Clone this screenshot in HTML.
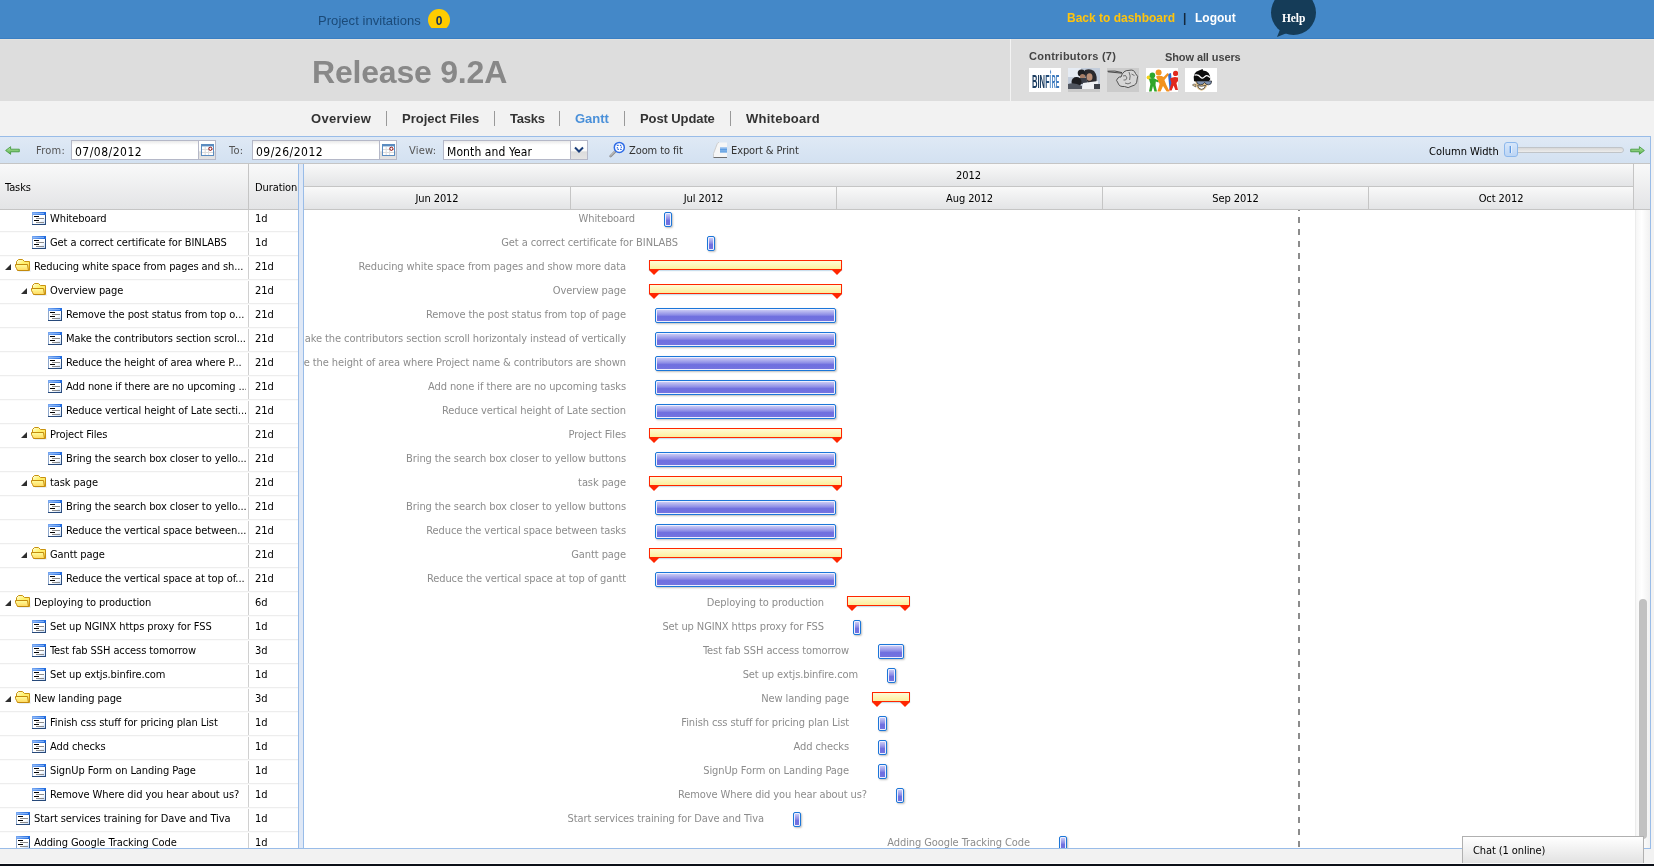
<!DOCTYPE html>
<html lang="en">
<head>
<meta charset="utf-8">
<title>Release 9.2A - Gantt</title>
<style>
*{box-sizing:border-box}
html,body{margin:0;padding:0}
body{width:1654px;height:866px;overflow:hidden;background:#f2f2f2;position:relative;font-family:"DejaVu Sans Condensed","Liberation Sans",sans-serif;font-size:11px;color:#000;letter-spacing:-0.09px}
#wrap{position:absolute;left:0;top:0;width:1654px;height:866px;will-change:transform}
.abs{position:absolute}
.hd{font-family:"Liberation Sans",sans-serif;font-weight:bold;letter-spacing:0}
#top{left:0;top:0;width:1654px;height:38px;background:#4488c8}
#top2{left:0;top:38px;width:1654px;height:1px;background:#3a7fc3}
#top3{left:0;top:39px;width:1654px;height:1px;background:#e4e3e0}
#band{left:0;top:40px;width:1654px;height:61px;background:#dddddd}
#vline{left:1010px;top:39px;width:1px;height:62px;background:#f3f3f3}
#inv{left:318px;top:13px;letter-spacing:.05px;font-family:"Liberation Sans",sans-serif;font-size:13px;line-height:16px;color:#1b4a78;white-space:nowrap}
#badge{left:428px;top:9px;width:22px;height:19px;overflow:hidden}
#badge i{position:absolute;left:0;top:0;width:22px;height:22px;border-radius:11px;background:#ffcc00}
#badge span{position:absolute;left:0;top:5px;width:22px;text-align:center;font:bold 12px/14px "Liberation Sans",sans-serif;color:#14305a}
#back{left:1067px;top:10px;font-size:12px;line-height:16px;color:#ffc40d;white-space:nowrap}
#pipe{left:1183px;top:10px;font-size:12px;line-height:16px;color:#14283c}
#logout{left:1195px;top:10px;font-size:12px;line-height:16px;color:#fff}
#help{left:1271px;top:-10px;width:45px;height:45px;border-radius:50%;background:#153c58}
#helptail{left:1274px;top:24px}
#helptx{left:1282px;top:10px;font:bold 11.5px/16px "Liberation Serif",serif;color:#fff}
#title{left:312px;top:53px;font-size:32px;line-height:38px;color:#888;letter-spacing:-0.2px;white-space:nowrap}
#contrib{left:1029px;top:49px;font-size:11px;line-height:14px;color:#444;white-space:nowrap;letter-spacing:0.25px}
#showall{left:1165px;top:50px;font-size:11px;line-height:14px;color:#444;white-space:nowrap;letter-spacing:-0.1px}
.av{position:absolute;top:68px;width:32px;height:24px;overflow:hidden;background:#fff}
#nav{left:311px;top:111px;height:16px;white-space:nowrap;font-size:13px;line-height:16px;color:#333}
#nav span{position:absolute;top:0}
#nav i{position:absolute;top:0px;width:1px;height:15px;background:#999}
/* toolbar */
#tb{left:0;top:136px;width:1651px;height:27px;border-top:1px solid #99bce8;border-right:1px solid #99bce8;background:linear-gradient(#dfe9f5,#d3e1f1)}
#tbb{left:0;top:163px;width:1650px;height:1px;background:#c5c5c5}
.tl{position:absolute;top:144px;font-size:11px;line-height:14px;color:#555;white-space:nowrap;letter-spacing:.25px}
.fld{position:absolute;top:140px;height:20px;border:1px solid #b5b8c8;background:linear-gradient(#e9e9e9 0,#fff 4px,#fff 100%);font-size:12px;line-height:18px;padding:2px 0 0 3px;color:#000;letter-spacing:.5px;white-space:nowrap;overflow:hidden}
.trg{position:absolute;top:140px;width:17px;height:20px;border:1px solid #b5b8c8;border-left:0;background:linear-gradient(#fff 0,#fafafa 55%,#dcdcdc 60%,#e4e4e4 100%)}
/* grid */
#hdrL{left:0;top:164px;width:298px;height:46px;background:linear-gradient(#f9f9f9,#e3e4e6);border-bottom:1px solid #c5c5c5}
#hdrL .c1{position:absolute;left:5px;top:17px;line-height:14px}
#hdrL .sep{position:absolute;left:248px;top:0;width:1px;height:45px;background:#c5c5c5}
#hdrL .c2{position:absolute;left:255px;top:17px;line-height:14px}
#split{left:298px;top:164px;width:6px;height:685px;background:#dfe8f6;border-left:1px solid #99bce8;border-right:1px solid #99bce8}
#hdrR{left:304px;top:164px;width:1346px;height:46px;background:linear-gradient(#f9f9f9,#e3e4e6);border-bottom:1px solid #c5c5c5}
#hdrR .r1{position:absolute;left:0;top:0;width:1330px;height:23px;border-bottom:1px solid #c5c5c5;border-right:1px solid #c5c5c5;background:linear-gradient(#f9f9f9,#e3e4e6);text-align:center;line-height:24px}
#hdrR .m{position:absolute;top:23px;height:22px;border-right:1px solid #c5c5c5;background:linear-gradient(#f9f9f9,#e3e4e6);text-align:center;line-height:24px}
#tree{left:0;top:210px;width:298px;height:638px;background:#fff;overflow:hidden}
#gantt{left:304px;top:210px;width:1331px;height:638px;background:#fff;overflow:hidden}
#colsep{left:248px;top:0;width:1px;height:638px;background:#d0d0d0}
.tr{position:absolute;left:0;width:298px;height:24px;border-top:1px solid #ededed;box-shadow:inset 0 1px 0 #fbfbfb}
.tr .ic{position:absolute;top:4px}
.tr .fo{top:3px}
.tr .ar{position:absolute;top:8px}
.tr .tt{position:absolute;top:4px;line-height:14px;white-space:nowrap;overflow:hidden}
.tr .du{position:absolute;left:255px;top:4px;line-height:14px}
.gr{position:absolute;left:0;width:1331px;height:24px}
.lb{position:absolute;right:auto;left:0;top:5px;line-height:14px;text-align:right;white-space:nowrap;color:#8c8c8c;direction:rtl;overflow:hidden}
.lb{direction:ltr;display:flex;justify-content:flex-end}
.tb{position:absolute;top:5px;height:15px;border:1px solid #1b76d8;border-radius:2px;background:#eef;box-shadow:1px 1px 2px rgba(0,0,0,.25)}
.tb i{position:absolute;left:1px;top:1px;right:1px;bottom:1px;background:linear-gradient(#c9c9f4 0,#8d8de6 45%,#6f6fdf 60%,#7373e0 100%)}
.pb{position:absolute;top:5px;height:10px;border:1px solid #ff2600;background:linear-gradient(#fffbd5,#fdee9d);box-shadow:0 1px 1px rgba(150,190,220,.5)}
.pb b{position:absolute;top:9px;width:0;height:0;border-left:5.5px solid transparent;border-right:5.5px solid transparent;border-top:5px solid #ff2600}
.pb b.l{left:-1px}
.pb b.r{right:-1px}
#today{left:1298px;top:210px;width:2px;height:638px;background-image:linear-gradient(to bottom,#8c8c8c 0,#8c8c8c 6px,transparent 6px,transparent 12px);background-size:2px 12px;background-repeat:repeat-y;background-position:0 7px}
#vs{left:1635px;top:210px;width:15px;height:638px;background:linear-gradient(to right,#f6f6f6,#fff 40%,#f1f1f1);border-left:1px solid #ececec}
#vsh{left:1634px;top:164px;width:16px;height:46px;background:linear-gradient(#f9f9f9,#e3e4e6);border-bottom:1px solid #c5c5c5}
#thumb{left:1639px;top:599px;width:8px;height:240px;border-radius:4px;background:#c1c1c1}
#rb{left:1650px;top:136px;width:1px;height:713px;background:#99bce8}
#bb{left:0;top:848px;width:1651px;height:1px;background:#99bce8}
#dark{left:0;top:864px;width:1654px;height:2px;background:#0c1018}
#dark0{left:0;top:863px;width:1654px;height:1px;background:#fafafa}
#chat{left:1462px;top:836px;width:182px;height:27px;border:1px solid #b0b0b0;border-bottom:0;background:linear-gradient(#fff,#e2e2e2);padding:7px 0 0 10px;line-height:14px;font-size:11px}
</style>
</head>
<body>
<div id="wrap">
<svg width="0" height="0" style="position:absolute"><defs>
<linearGradient id="tg" x1="0" y1="0" x2="1" y2="1"><stop offset="0" stop-color="#fff"/><stop offset="0.6" stop-color="#fff"/><stop offset="1" stop-color="#c4daf8"/></linearGradient>
<linearGradient id="fg" x1="0" y1="0" x2="0" y2="1"><stop offset="0" stop-color="#ffff9e"/><stop offset="1" stop-color="#ffd75e"/></linearGradient>
<linearGradient id="fb" x1="0" y1="0" x2="1" y2="1"><stop offset="0" stop-color="#fffde0"/><stop offset="0.4" stop-color="#fff36e"/><stop offset="1" stop-color="#ffd862"/></linearGradient>
<linearGradient id="th" x1="0" y1="0" x2="1" y2="0"><stop offset="0" stop-color="#78a8f2"/><stop offset="1" stop-color="#1c68de"/></linearGradient>
</defs></svg>

<div id="top" class="abs"></div><div id="top2" class="abs"></div><div id="top3" class="abs"></div>
<div id="band" class="abs"></div><div id="vline" class="abs"></div>
<div id="inv" class="abs">Project invitations</div>
<div id="badge" class="abs"><i></i><span>0</span></div>
<div id="back" class="abs hd">Back to dashboard</div>
<div id="pipe" class="abs hd">|</div>
<div id="logout" class="abs hd">Logout</div>
<div id="help" class="abs"></div>
<svg id="helptail" class="abs" width="14" height="14" viewBox="0 0 14 14"><path d="M3 13 L7 3 L13 9 Z" fill="#153c58"/></svg>
<div id="helptx" class="abs">Help</div>
<div id="title" class="abs hd">Release 9.2A</div>
<div id="contrib" class="abs hd">Contributors (7)</div>
<div id="showall" class="abs hd">Show all users</div>

<div class="av" style="left:1029px"><svg width="32" height="24" viewBox="0 0 32 24"><rect width="32" height="24" fill="#fff"/><text x="3" y="20.4" font-family="Liberation Sans, sans-serif" font-weight="bold" font-size="19" textLength="13" lengthAdjust="spacingAndGlyphs" fill="#1c3d60">BIN</text><text x="16.3" y="20.4" font-family="Liberation Sans, sans-serif" font-weight="bold" font-size="19" textLength="4.2" lengthAdjust="spacingAndGlyphs" fill="#1f4a78">F</text><text x="20.6" y="20.4" font-family="Liberation Sans, sans-serif" font-weight="bold" font-size="19" textLength="1.6" lengthAdjust="spacingAndGlyphs" fill="#4a86c8">I</text><path d="M21.6 6 Q20.4 3.6 21.4 1.6 Q22.6 4 21.9 6.4 Z" fill="#4a86c8"/><text x="22.8" y="20.4" font-family="Liberation Sans, sans-serif" font-weight="bold" font-size="19" textLength="7.4" lengthAdjust="spacingAndGlyphs" fill="#3a78bc">RE</text></svg></div>
<div class="av" style="left:1068px;background:#c9c9c9"><svg width="32" height="24" viewBox="0 0 32 24"><rect width="32" height="21" fill="#c3cddb"/><rect width="13" height="9" fill="#e6ecf4"/><path d="M17 2 Q22 0 26 3 Q30 8 28 15 L20 15 Q16 8 17 2 Z" fill="#2b2a2e"/><ellipse cx="21.5" cy="9" rx="3" ry="3.8" fill="#b98e76"/><ellipse cx="13.5" cy="5" rx="3.8" ry="3.6" fill="#1f2024"/><ellipse cx="14.5" cy="8.6" rx="2.6" ry="2.6" fill="#a67d66"/><path d="M10 10 H18 L20 16 H9 Z" fill="#3a3f4a"/><ellipse cx="8.5" cy="14" rx="5" ry="5" fill="#1c1d21"/><path d="M0 21 V16 Q6 14 14 18 V21 Z" fill="#50555f"/><path d="M15 15 L30 13 V21 H14 Z" fill="#eef0f3"/><rect x="26" y="16" width="6" height="5" fill="#3c4048"/><rect y="21" width="32" height="3" fill="#c9c9c9"/></svg></div>
<div class="av" style="left:1107px;background:#cbcbcb"><svg width="32" height="24" viewBox="0 0 32 24"><rect width="32" height="24" fill="#cbcbcb"/><path d="M0.5 3.2 Q8 2.2 15 4.6 M1 3.8 L15 5.2" fill="none" stroke="#3c3c3c" stroke-width="0.9"/><path d="M14 9 Q16 2 22 2.4 Q27 1 28.5 5.5 Q32 8 30 12 Q30 17 25 18 Q21 21 17.5 18.5 Q12 19 11 15 Q8 12 11 10 Q12 8.6 14 9 Z" fill="#d6d6d6" stroke="#444" stroke-width="0.9"/><path d="M16 8 Q19 6 20 10 Q19 13 16.5 12 M22 4 Q24 8 22.6 12 M24.5 6 L27.5 7.6 M18 15 Q21 17 24 14.6" fill="none" stroke="#555" stroke-width="0.8"/></svg></div>
<div class="av" style="left:1146px"><svg width="32" height="24" viewBox="0 0 32 24"><rect width="32" height="24" fill="#fff"/><path d="M22 6 L25 5 L26.5 20 L23.5 21 Z" fill="#2c6ad0"/><circle cx="2.6" cy="9.4" r="2" fill="#f2d21a"/><circle cx="6.4" cy="7.4" r="2.8" fill="#2fa62a"/><path d="M3 11 Q7 9 10 11.5 L9.5 17 L11 23.5 H8.4 L7 18 L5.6 23.5 H3 L4.4 16 Z" fill="#2fa62a"/><path d="M9 11 L13 12.6 L12.4 14.4 L8.6 13 Z" fill="#2fa62a"/><circle cx="12.6" cy="4.4" r="3" fill="#f2921e"/><path d="M10 8.6 Q14 6.6 17.6 9 L21.5 5 L23 6.4 L18.4 12 L20.4 17 L23.6 23.4 H20.6 L17 18 L14.6 23.6 H11.4 L13.6 16 Z" fill="#f2921e"/><circle cx="29.6" cy="5.4" r="2.6" fill="#e2281e"/><path d="M24 10.6 Q28 8 32 9.6 V13 L30.4 15 L32 22 H29.4 L27.6 17.6 L25.6 22.6 H23 L25.4 15 Z" fill="#e2281e"/></svg></div>
<div class="av" style="left:1185px"><svg width="32" height="24" viewBox="0 0 32 24"><rect width="32" height="24" fill="#fff"/><path d="M9 13 Q7.4 4 14 2.4 L17.6 1 L18 2.4 Q25.6 2.6 25.2 11.6 L23 14 H11 Z" fill="#0c0c0c"/><path d="M10.6 13 Q10 19 13.6 21.6 Q16.6 23.8 19.4 21.6 Q23 19 23 13 Z" fill="#e5c58e"/><path d="M9.4 7.2 Q13 6 15.4 9 Q17.6 11.4 20 8.4 Q22 6.6 25 9.4" fill="none" stroke="#fff" stroke-width="1.3"/><path d="M11.4 13 H26.6 Q27 16.6 23.4 16.8 Q20.6 16.8 19.6 14.4 Q18.4 17 15.4 16.8 Q11.6 16.6 11.4 13 Z" fill="#7e93b4" stroke="#222" stroke-width="0.7"/><path d="M12.6 17.6 Q16.4 19 20.6 17.4 Q19.6 21.4 16.6 21.4 Q13.6 21.4 12.6 17.6 Z" fill="#fff" stroke="#222" stroke-width="0.7"/><path d="M7.4 17 Q9 15 10.8 16.6 L10.6 19 Z" fill="#e5c58e" stroke="#222" stroke-width="0.5"/></svg></div>
<div id="nav" class="abs hd">
<span style="left:0;letter-spacing:.3px">Overview</span><i style="left:75px"></i>
<span style="left:91px">Project Files</span><i style="left:183px"></i>
<span style="left:199px;letter-spacing:-.25px">Tasks</span><i style="left:248px"></i>
<span style="left:264px;color:#4a90d9">Gantt</span><i style="left:313px"></i>
<span style="left:329px;letter-spacing:-.1px">Post Update</span><i style="left:419px"></i>
<span style="left:435px;letter-spacing:.25px">Whiteboard</span>
</div>

<div id="tb" class="abs"></div><div id="tbb" class="abs"></div>

<svg class="abs" style="left:5px;top:146px" width="15" height="9" viewBox="0 0 15 9"><defs><linearGradient id="ga" x1="0" y1="0" x2="0" y2="1"><stop offset="0" stop-color="#b4e6a6"/><stop offset="1" stop-color="#58b048"/></linearGradient></defs><path d="M0.6 4.5 L5.6 0.7 V3.2 H14.3 V5.8 H5.6 V8.3 Z" fill="url(#ga)" stroke="#3c9636" stroke-width="0.8"/></svg>
<span class="tl" style="left:36px">From:</span>
<div class="fld" style="left:71px;width:128px">07/08/2012</div>
<div class="trg" style="left:199px"><svg style="position:absolute;left:2px;top:3px" width="13" height="12" viewBox="0 0 13 12"><rect x="0.5" y="0.5" width="12" height="11" fill="#fff" stroke="#5b8cc0"/><rect x="0" y="0" width="13" height="2.4" fill="#5b8cc0"/><path d="M1 5.5H12M1 8.5H12M4.2 3V11M7.6 3V11" stroke="#dcdcdc" stroke-width="1" fill="none"/><circle cx="9.4" cy="4.8" r="1.6" fill="#fff" stroke="#8e0a0a" stroke-width="1"/></svg></div>
<span class="tl" style="left:229px">To:</span>
<div class="fld" style="left:252px;width:128px">09/26/2012</div>
<div class="trg" style="left:380px"><svg style="position:absolute;left:2px;top:3px" width="13" height="12" viewBox="0 0 13 12"><rect x="0.5" y="0.5" width="12" height="11" fill="#fff" stroke="#5b8cc0"/><rect x="0" y="0" width="13" height="2.4" fill="#5b8cc0"/><path d="M1 5.5H12M1 8.5H12M4.2 3V11M7.6 3V11" stroke="#dcdcdc" stroke-width="1" fill="none"/><circle cx="9.4" cy="4.8" r="1.6" fill="#fff" stroke="#8e0a0a" stroke-width="1"/></svg></div>
<span class="tl" style="left:409px">View:</span>
<div class="fld" style="left:443px;width:128px;letter-spacing:.1px">Month and Year</div>
<div class="trg" style="left:571px"><svg style="position:absolute;left:3px;top:5px" width="10" height="8" viewBox="0 0 10 8"><path d="M1 1.5 L5 5.5 L9 1.5" fill="none" stroke="#1c3f7a" stroke-width="2"/></svg></div>
<svg class="abs" style="left:609px;top:141px" width="17" height="18" viewBox="0 0 17 18"><path d="M1.6 15.2 L6.6 10.2" stroke="#8c8c8c" stroke-width="2.4" stroke-linecap="round"/><path d="M1.6 14.8 L6.4 10" stroke="#e4e4e4" stroke-width="0.8" stroke-linecap="round"/><circle cx="10.3" cy="6.4" r="5" fill="#fff" stroke="#2d6be6" stroke-width="1.5"/><rect x="8.3" y="4.4" width="4" height="4" fill="none" stroke="#2d6be6" stroke-width="1.1" stroke-dasharray="1.4 1.2"/></svg>
<span class="tl" style="left:629px;color:#333;letter-spacing:-.1px">Zoom to fit</span>
<svg class="abs" style="left:712px;top:141px" width="16" height="18" viewBox="0 0 16 18"><path d="M1.5 16 V12.5 L5.3 2.6 Q5.7 1.5 7 1.5 H15 V16 Z" fill="#f6f6f6"/><path d="M1.5 16 V12.5 L5.3 2.6 Q5.7 1.5 7 1.5" fill="none" stroke="#c9c9c9" stroke-width="0.9"/><rect x="8" y="6" width="7" height="5.6" fill="#5d9de2"/><rect x="8" y="6" width="7" height="1.6" fill="#a9cbf1"/><rect x="8" y="9.4" width="7" height="1" fill="#8fbbea"/><path d="M1.5 16.5H15" stroke="#6f6f6f" stroke-width="1"/></svg>
<span class="tl" style="left:731px;color:#333;letter-spacing:-.1px">Export &amp; Print</span>
<span class="tl" style="left:1429px;top:145px;color:#000;letter-spacing:0">Column Width</span>
<div class="abs" style="left:1511px;top:147px;width:113px;height:6px;border-radius:3px;border:1px solid #c0c4c8;background:linear-gradient(#d8d8d8,#ececec)"></div>
<div class="abs" style="left:1504px;top:142px;width:14px;height:15px;border-radius:3px;border:1px solid #8db8ec;background:linear-gradient(#d6e6fa,#bcd5f4)"><i style="position:absolute;left:5px;top:3px;width:1px;height:7px;background:#5e98e0;box-shadow:-1px 0 0 #a6c8f2,1px 0 0 #e6f0fc"></i></div>
<svg class="abs" style="left:1630px;top:146px" width="15" height="9" viewBox="0 0 15 9"><path d="M14.4 4.5 L9.4 0.7 V3.2 H0.7 V5.8 H9.4 V8.3 Z" fill="url(#ga)" stroke="#3c9636" stroke-width="0.8"/></svg>


<div id="tree" class="abs">
<div id="colsep" class="abs"></div>
<div class="tr" style="top:-3px"><svg class="ic" style="left:32px" width="14" height="13" viewBox="0 0 14 13"><rect x="0" y="0" width="14" height="13" fill="#fff"/><rect x="1" y="3" width="12" height="9" fill="url(#tg)"/><rect x="0" y="0" width="14" height="3" fill="url(#th)"/><rect x="1" y="1" width="11" height="1" fill="#9cc3fb" opacity=".7"/><rect x="0" y="3" width="1" height="10" fill="#8fa8cc"/><rect x="13" y="3" width="1" height="10" fill="#2c4d7c"/><rect x="0" y="12" width="14" height="1" fill="#27497a"/><rect x="2" y="4" width="5" height="1" fill="#000"/><rect x="4" y="6" width="8" height="1" fill="#8c8c8c"/><rect x="2" y="8" width="5" height="1" fill="#000"/><rect x="4" y="10" width="8" height="1" fill="#8c8c8c"/></svg><span class="tt" style="left:50px;width:196px">Whiteboard</span><span class="du">1d</span></div>
<div class="tr" style="top:21px"><svg class="ic" style="left:32px" width="14" height="13" viewBox="0 0 14 13"><rect x="0" y="0" width="14" height="13" fill="#fff"/><rect x="1" y="3" width="12" height="9" fill="url(#tg)"/><rect x="0" y="0" width="14" height="3" fill="url(#th)"/><rect x="1" y="1" width="11" height="1" fill="#9cc3fb" opacity=".7"/><rect x="0" y="3" width="1" height="10" fill="#8fa8cc"/><rect x="13" y="3" width="1" height="10" fill="#2c4d7c"/><rect x="0" y="12" width="14" height="1" fill="#27497a"/><rect x="2" y="4" width="5" height="1" fill="#000"/><rect x="4" y="6" width="8" height="1" fill="#8c8c8c"/><rect x="2" y="8" width="5" height="1" fill="#000"/><rect x="4" y="10" width="8" height="1" fill="#8c8c8c"/></svg><span class="tt" style="left:50px;width:196px">Get a correct certificate for BINLABS</span><span class="du">1d</span></div>
<div class="tr" style="top:45px"><svg class="ar" style="left:5px" width="6" height="6" viewBox="0 0 6 6"><path d="M6 0 V6 H0 Z" fill="#2e2e2e"/></svg><svg class="ic fo" style="left:15px" width="17" height="13" viewBox="0 0 17 13"><path d="M3.5 12 H14.5 V12.6 H4 Z M15.5 4 V11.5 L14.5 12.5 H15.8 Z" fill="#b9c9dc" opacity=".6"/><path d="M1.5 5.5 V2.5 L3.5 0.5 H7.5 L9.5 2.5 H14.5 V11.5 H3 Z" fill="url(#fb)" stroke="#c8920f"/><path d="M0.5 5.5 H12.5 L13.5 11.5 H2.5 L1.5 9.5 L0.5 7.5 Z" fill="url(#fg)" stroke="#c38a0c"/></svg><span class="tt" style="left:34px;width:212px">Reducing white space from pages and sh...</span><span class="du">21d</span></div>
<div class="tr" style="top:69px"><svg class="ar" style="left:21px" width="6" height="6" viewBox="0 0 6 6"><path d="M6 0 V6 H0 Z" fill="#2e2e2e"/></svg><svg class="ic fo" style="left:31px" width="17" height="13" viewBox="0 0 17 13"><path d="M3.5 12 H14.5 V12.6 H4 Z M15.5 4 V11.5 L14.5 12.5 H15.8 Z" fill="#b9c9dc" opacity=".6"/><path d="M1.5 5.5 V2.5 L3.5 0.5 H7.5 L9.5 2.5 H14.5 V11.5 H3 Z" fill="url(#fb)" stroke="#c8920f"/><path d="M0.5 5.5 H12.5 L13.5 11.5 H2.5 L1.5 9.5 L0.5 7.5 Z" fill="url(#fg)" stroke="#c38a0c"/></svg><span class="tt" style="left:50px;width:196px">Overview page</span><span class="du">21d</span></div>
<div class="tr" style="top:93px"><svg class="ic" style="left:48px" width="14" height="13" viewBox="0 0 14 13"><rect x="0" y="0" width="14" height="13" fill="#fff"/><rect x="1" y="3" width="12" height="9" fill="url(#tg)"/><rect x="0" y="0" width="14" height="3" fill="url(#th)"/><rect x="1" y="1" width="11" height="1" fill="#9cc3fb" opacity=".7"/><rect x="0" y="3" width="1" height="10" fill="#8fa8cc"/><rect x="13" y="3" width="1" height="10" fill="#2c4d7c"/><rect x="0" y="12" width="14" height="1" fill="#27497a"/><rect x="2" y="4" width="5" height="1" fill="#000"/><rect x="4" y="6" width="8" height="1" fill="#8c8c8c"/><rect x="2" y="8" width="5" height="1" fill="#000"/><rect x="4" y="10" width="8" height="1" fill="#8c8c8c"/></svg><span class="tt" style="left:66px;width:180px">Remove the post status from top o...</span><span class="du">21d</span></div>
<div class="tr" style="top:117px"><svg class="ic" style="left:48px" width="14" height="13" viewBox="0 0 14 13"><rect x="0" y="0" width="14" height="13" fill="#fff"/><rect x="1" y="3" width="12" height="9" fill="url(#tg)"/><rect x="0" y="0" width="14" height="3" fill="url(#th)"/><rect x="1" y="1" width="11" height="1" fill="#9cc3fb" opacity=".7"/><rect x="0" y="3" width="1" height="10" fill="#8fa8cc"/><rect x="13" y="3" width="1" height="10" fill="#2c4d7c"/><rect x="0" y="12" width="14" height="1" fill="#27497a"/><rect x="2" y="4" width="5" height="1" fill="#000"/><rect x="4" y="6" width="8" height="1" fill="#8c8c8c"/><rect x="2" y="8" width="5" height="1" fill="#000"/><rect x="4" y="10" width="8" height="1" fill="#8c8c8c"/></svg><span class="tt" style="left:66px;width:180px">Make the contributors section scrol...</span><span class="du">21d</span></div>
<div class="tr" style="top:141px"><svg class="ic" style="left:48px" width="14" height="13" viewBox="0 0 14 13"><rect x="0" y="0" width="14" height="13" fill="#fff"/><rect x="1" y="3" width="12" height="9" fill="url(#tg)"/><rect x="0" y="0" width="14" height="3" fill="url(#th)"/><rect x="1" y="1" width="11" height="1" fill="#9cc3fb" opacity=".7"/><rect x="0" y="3" width="1" height="10" fill="#8fa8cc"/><rect x="13" y="3" width="1" height="10" fill="#2c4d7c"/><rect x="0" y="12" width="14" height="1" fill="#27497a"/><rect x="2" y="4" width="5" height="1" fill="#000"/><rect x="4" y="6" width="8" height="1" fill="#8c8c8c"/><rect x="2" y="8" width="5" height="1" fill="#000"/><rect x="4" y="10" width="8" height="1" fill="#8c8c8c"/></svg><span class="tt" style="left:66px;width:180px">Reduce the height of area where P...</span><span class="du">21d</span></div>
<div class="tr" style="top:165px"><svg class="ic" style="left:48px" width="14" height="13" viewBox="0 0 14 13"><rect x="0" y="0" width="14" height="13" fill="#fff"/><rect x="1" y="3" width="12" height="9" fill="url(#tg)"/><rect x="0" y="0" width="14" height="3" fill="url(#th)"/><rect x="1" y="1" width="11" height="1" fill="#9cc3fb" opacity=".7"/><rect x="0" y="3" width="1" height="10" fill="#8fa8cc"/><rect x="13" y="3" width="1" height="10" fill="#2c4d7c"/><rect x="0" y="12" width="14" height="1" fill="#27497a"/><rect x="2" y="4" width="5" height="1" fill="#000"/><rect x="4" y="6" width="8" height="1" fill="#8c8c8c"/><rect x="2" y="8" width="5" height="1" fill="#000"/><rect x="4" y="10" width="8" height="1" fill="#8c8c8c"/></svg><span class="tt" style="left:66px;width:180px">Add none if there are no upcoming ...</span><span class="du">21d</span></div>
<div class="tr" style="top:189px"><svg class="ic" style="left:48px" width="14" height="13" viewBox="0 0 14 13"><rect x="0" y="0" width="14" height="13" fill="#fff"/><rect x="1" y="3" width="12" height="9" fill="url(#tg)"/><rect x="0" y="0" width="14" height="3" fill="url(#th)"/><rect x="1" y="1" width="11" height="1" fill="#9cc3fb" opacity=".7"/><rect x="0" y="3" width="1" height="10" fill="#8fa8cc"/><rect x="13" y="3" width="1" height="10" fill="#2c4d7c"/><rect x="0" y="12" width="14" height="1" fill="#27497a"/><rect x="2" y="4" width="5" height="1" fill="#000"/><rect x="4" y="6" width="8" height="1" fill="#8c8c8c"/><rect x="2" y="8" width="5" height="1" fill="#000"/><rect x="4" y="10" width="8" height="1" fill="#8c8c8c"/></svg><span class="tt" style="left:66px;width:180px">Reduce vertical height of Late secti...</span><span class="du">21d</span></div>
<div class="tr" style="top:213px"><svg class="ar" style="left:21px" width="6" height="6" viewBox="0 0 6 6"><path d="M6 0 V6 H0 Z" fill="#2e2e2e"/></svg><svg class="ic fo" style="left:31px" width="17" height="13" viewBox="0 0 17 13"><path d="M3.5 12 H14.5 V12.6 H4 Z M15.5 4 V11.5 L14.5 12.5 H15.8 Z" fill="#b9c9dc" opacity=".6"/><path d="M1.5 5.5 V2.5 L3.5 0.5 H7.5 L9.5 2.5 H14.5 V11.5 H3 Z" fill="url(#fb)" stroke="#c8920f"/><path d="M0.5 5.5 H12.5 L13.5 11.5 H2.5 L1.5 9.5 L0.5 7.5 Z" fill="url(#fg)" stroke="#c38a0c"/></svg><span class="tt" style="left:50px;width:196px">Project Files</span><span class="du">21d</span></div>
<div class="tr" style="top:237px"><svg class="ic" style="left:48px" width="14" height="13" viewBox="0 0 14 13"><rect x="0" y="0" width="14" height="13" fill="#fff"/><rect x="1" y="3" width="12" height="9" fill="url(#tg)"/><rect x="0" y="0" width="14" height="3" fill="url(#th)"/><rect x="1" y="1" width="11" height="1" fill="#9cc3fb" opacity=".7"/><rect x="0" y="3" width="1" height="10" fill="#8fa8cc"/><rect x="13" y="3" width="1" height="10" fill="#2c4d7c"/><rect x="0" y="12" width="14" height="1" fill="#27497a"/><rect x="2" y="4" width="5" height="1" fill="#000"/><rect x="4" y="6" width="8" height="1" fill="#8c8c8c"/><rect x="2" y="8" width="5" height="1" fill="#000"/><rect x="4" y="10" width="8" height="1" fill="#8c8c8c"/></svg><span class="tt" style="left:66px;width:180px">Bring the search box closer to yello...</span><span class="du">21d</span></div>
<div class="tr" style="top:261px"><svg class="ar" style="left:21px" width="6" height="6" viewBox="0 0 6 6"><path d="M6 0 V6 H0 Z" fill="#2e2e2e"/></svg><svg class="ic fo" style="left:31px" width="17" height="13" viewBox="0 0 17 13"><path d="M3.5 12 H14.5 V12.6 H4 Z M15.5 4 V11.5 L14.5 12.5 H15.8 Z" fill="#b9c9dc" opacity=".6"/><path d="M1.5 5.5 V2.5 L3.5 0.5 H7.5 L9.5 2.5 H14.5 V11.5 H3 Z" fill="url(#fb)" stroke="#c8920f"/><path d="M0.5 5.5 H12.5 L13.5 11.5 H2.5 L1.5 9.5 L0.5 7.5 Z" fill="url(#fg)" stroke="#c38a0c"/></svg><span class="tt" style="left:50px;width:196px">task page</span><span class="du">21d</span></div>
<div class="tr" style="top:285px"><svg class="ic" style="left:48px" width="14" height="13" viewBox="0 0 14 13"><rect x="0" y="0" width="14" height="13" fill="#fff"/><rect x="1" y="3" width="12" height="9" fill="url(#tg)"/><rect x="0" y="0" width="14" height="3" fill="url(#th)"/><rect x="1" y="1" width="11" height="1" fill="#9cc3fb" opacity=".7"/><rect x="0" y="3" width="1" height="10" fill="#8fa8cc"/><rect x="13" y="3" width="1" height="10" fill="#2c4d7c"/><rect x="0" y="12" width="14" height="1" fill="#27497a"/><rect x="2" y="4" width="5" height="1" fill="#000"/><rect x="4" y="6" width="8" height="1" fill="#8c8c8c"/><rect x="2" y="8" width="5" height="1" fill="#000"/><rect x="4" y="10" width="8" height="1" fill="#8c8c8c"/></svg><span class="tt" style="left:66px;width:180px">Bring the search box closer to yello...</span><span class="du">21d</span></div>
<div class="tr" style="top:309px"><svg class="ic" style="left:48px" width="14" height="13" viewBox="0 0 14 13"><rect x="0" y="0" width="14" height="13" fill="#fff"/><rect x="1" y="3" width="12" height="9" fill="url(#tg)"/><rect x="0" y="0" width="14" height="3" fill="url(#th)"/><rect x="1" y="1" width="11" height="1" fill="#9cc3fb" opacity=".7"/><rect x="0" y="3" width="1" height="10" fill="#8fa8cc"/><rect x="13" y="3" width="1" height="10" fill="#2c4d7c"/><rect x="0" y="12" width="14" height="1" fill="#27497a"/><rect x="2" y="4" width="5" height="1" fill="#000"/><rect x="4" y="6" width="8" height="1" fill="#8c8c8c"/><rect x="2" y="8" width="5" height="1" fill="#000"/><rect x="4" y="10" width="8" height="1" fill="#8c8c8c"/></svg><span class="tt" style="left:66px;width:180px">Reduce the vertical space between...</span><span class="du">21d</span></div>
<div class="tr" style="top:333px"><svg class="ar" style="left:21px" width="6" height="6" viewBox="0 0 6 6"><path d="M6 0 V6 H0 Z" fill="#2e2e2e"/></svg><svg class="ic fo" style="left:31px" width="17" height="13" viewBox="0 0 17 13"><path d="M3.5 12 H14.5 V12.6 H4 Z M15.5 4 V11.5 L14.5 12.5 H15.8 Z" fill="#b9c9dc" opacity=".6"/><path d="M1.5 5.5 V2.5 L3.5 0.5 H7.5 L9.5 2.5 H14.5 V11.5 H3 Z" fill="url(#fb)" stroke="#c8920f"/><path d="M0.5 5.5 H12.5 L13.5 11.5 H2.5 L1.5 9.5 L0.5 7.5 Z" fill="url(#fg)" stroke="#c38a0c"/></svg><span class="tt" style="left:50px;width:196px">Gantt page</span><span class="du">21d</span></div>
<div class="tr" style="top:357px"><svg class="ic" style="left:48px" width="14" height="13" viewBox="0 0 14 13"><rect x="0" y="0" width="14" height="13" fill="#fff"/><rect x="1" y="3" width="12" height="9" fill="url(#tg)"/><rect x="0" y="0" width="14" height="3" fill="url(#th)"/><rect x="1" y="1" width="11" height="1" fill="#9cc3fb" opacity=".7"/><rect x="0" y="3" width="1" height="10" fill="#8fa8cc"/><rect x="13" y="3" width="1" height="10" fill="#2c4d7c"/><rect x="0" y="12" width="14" height="1" fill="#27497a"/><rect x="2" y="4" width="5" height="1" fill="#000"/><rect x="4" y="6" width="8" height="1" fill="#8c8c8c"/><rect x="2" y="8" width="5" height="1" fill="#000"/><rect x="4" y="10" width="8" height="1" fill="#8c8c8c"/></svg><span class="tt" style="left:66px;width:180px">Reduce the vertical space at top of...</span><span class="du">21d</span></div>
<div class="tr" style="top:381px"><svg class="ar" style="left:5px" width="6" height="6" viewBox="0 0 6 6"><path d="M6 0 V6 H0 Z" fill="#2e2e2e"/></svg><svg class="ic fo" style="left:15px" width="17" height="13" viewBox="0 0 17 13"><path d="M3.5 12 H14.5 V12.6 H4 Z M15.5 4 V11.5 L14.5 12.5 H15.8 Z" fill="#b9c9dc" opacity=".6"/><path d="M1.5 5.5 V2.5 L3.5 0.5 H7.5 L9.5 2.5 H14.5 V11.5 H3 Z" fill="url(#fb)" stroke="#c8920f"/><path d="M0.5 5.5 H12.5 L13.5 11.5 H2.5 L1.5 9.5 L0.5 7.5 Z" fill="url(#fg)" stroke="#c38a0c"/></svg><span class="tt" style="left:34px;width:212px">Deploying to production</span><span class="du">6d</span></div>
<div class="tr" style="top:405px"><svg class="ic" style="left:32px" width="14" height="13" viewBox="0 0 14 13"><rect x="0" y="0" width="14" height="13" fill="#fff"/><rect x="1" y="3" width="12" height="9" fill="url(#tg)"/><rect x="0" y="0" width="14" height="3" fill="url(#th)"/><rect x="1" y="1" width="11" height="1" fill="#9cc3fb" opacity=".7"/><rect x="0" y="3" width="1" height="10" fill="#8fa8cc"/><rect x="13" y="3" width="1" height="10" fill="#2c4d7c"/><rect x="0" y="12" width="14" height="1" fill="#27497a"/><rect x="2" y="4" width="5" height="1" fill="#000"/><rect x="4" y="6" width="8" height="1" fill="#8c8c8c"/><rect x="2" y="8" width="5" height="1" fill="#000"/><rect x="4" y="10" width="8" height="1" fill="#8c8c8c"/></svg><span class="tt" style="left:50px;width:196px">Set up NGINX https proxy for FSS</span><span class="du">1d</span></div>
<div class="tr" style="top:429px"><svg class="ic" style="left:32px" width="14" height="13" viewBox="0 0 14 13"><rect x="0" y="0" width="14" height="13" fill="#fff"/><rect x="1" y="3" width="12" height="9" fill="url(#tg)"/><rect x="0" y="0" width="14" height="3" fill="url(#th)"/><rect x="1" y="1" width="11" height="1" fill="#9cc3fb" opacity=".7"/><rect x="0" y="3" width="1" height="10" fill="#8fa8cc"/><rect x="13" y="3" width="1" height="10" fill="#2c4d7c"/><rect x="0" y="12" width="14" height="1" fill="#27497a"/><rect x="2" y="4" width="5" height="1" fill="#000"/><rect x="4" y="6" width="8" height="1" fill="#8c8c8c"/><rect x="2" y="8" width="5" height="1" fill="#000"/><rect x="4" y="10" width="8" height="1" fill="#8c8c8c"/></svg><span class="tt" style="left:50px;width:196px">Test fab SSH access tomorrow</span><span class="du">3d</span></div>
<div class="tr" style="top:453px"><svg class="ic" style="left:32px" width="14" height="13" viewBox="0 0 14 13"><rect x="0" y="0" width="14" height="13" fill="#fff"/><rect x="1" y="3" width="12" height="9" fill="url(#tg)"/><rect x="0" y="0" width="14" height="3" fill="url(#th)"/><rect x="1" y="1" width="11" height="1" fill="#9cc3fb" opacity=".7"/><rect x="0" y="3" width="1" height="10" fill="#8fa8cc"/><rect x="13" y="3" width="1" height="10" fill="#2c4d7c"/><rect x="0" y="12" width="14" height="1" fill="#27497a"/><rect x="2" y="4" width="5" height="1" fill="#000"/><rect x="4" y="6" width="8" height="1" fill="#8c8c8c"/><rect x="2" y="8" width="5" height="1" fill="#000"/><rect x="4" y="10" width="8" height="1" fill="#8c8c8c"/></svg><span class="tt" style="left:50px;width:196px">Set up extjs.binfire.com</span><span class="du">1d</span></div>
<div class="tr" style="top:477px"><svg class="ar" style="left:5px" width="6" height="6" viewBox="0 0 6 6"><path d="M6 0 V6 H0 Z" fill="#2e2e2e"/></svg><svg class="ic fo" style="left:15px" width="17" height="13" viewBox="0 0 17 13"><path d="M3.5 12 H14.5 V12.6 H4 Z M15.5 4 V11.5 L14.5 12.5 H15.8 Z" fill="#b9c9dc" opacity=".6"/><path d="M1.5 5.5 V2.5 L3.5 0.5 H7.5 L9.5 2.5 H14.5 V11.5 H3 Z" fill="url(#fb)" stroke="#c8920f"/><path d="M0.5 5.5 H12.5 L13.5 11.5 H2.5 L1.5 9.5 L0.5 7.5 Z" fill="url(#fg)" stroke="#c38a0c"/></svg><span class="tt" style="left:34px;width:212px">New landing page</span><span class="du">3d</span></div>
<div class="tr" style="top:501px"><svg class="ic" style="left:32px" width="14" height="13" viewBox="0 0 14 13"><rect x="0" y="0" width="14" height="13" fill="#fff"/><rect x="1" y="3" width="12" height="9" fill="url(#tg)"/><rect x="0" y="0" width="14" height="3" fill="url(#th)"/><rect x="1" y="1" width="11" height="1" fill="#9cc3fb" opacity=".7"/><rect x="0" y="3" width="1" height="10" fill="#8fa8cc"/><rect x="13" y="3" width="1" height="10" fill="#2c4d7c"/><rect x="0" y="12" width="14" height="1" fill="#27497a"/><rect x="2" y="4" width="5" height="1" fill="#000"/><rect x="4" y="6" width="8" height="1" fill="#8c8c8c"/><rect x="2" y="8" width="5" height="1" fill="#000"/><rect x="4" y="10" width="8" height="1" fill="#8c8c8c"/></svg><span class="tt" style="left:50px;width:196px">Finish css stuff for pricing plan List</span><span class="du">1d</span></div>
<div class="tr" style="top:525px"><svg class="ic" style="left:32px" width="14" height="13" viewBox="0 0 14 13"><rect x="0" y="0" width="14" height="13" fill="#fff"/><rect x="1" y="3" width="12" height="9" fill="url(#tg)"/><rect x="0" y="0" width="14" height="3" fill="url(#th)"/><rect x="1" y="1" width="11" height="1" fill="#9cc3fb" opacity=".7"/><rect x="0" y="3" width="1" height="10" fill="#8fa8cc"/><rect x="13" y="3" width="1" height="10" fill="#2c4d7c"/><rect x="0" y="12" width="14" height="1" fill="#27497a"/><rect x="2" y="4" width="5" height="1" fill="#000"/><rect x="4" y="6" width="8" height="1" fill="#8c8c8c"/><rect x="2" y="8" width="5" height="1" fill="#000"/><rect x="4" y="10" width="8" height="1" fill="#8c8c8c"/></svg><span class="tt" style="left:50px;width:196px">Add checks</span><span class="du">1d</span></div>
<div class="tr" style="top:549px"><svg class="ic" style="left:32px" width="14" height="13" viewBox="0 0 14 13"><rect x="0" y="0" width="14" height="13" fill="#fff"/><rect x="1" y="3" width="12" height="9" fill="url(#tg)"/><rect x="0" y="0" width="14" height="3" fill="url(#th)"/><rect x="1" y="1" width="11" height="1" fill="#9cc3fb" opacity=".7"/><rect x="0" y="3" width="1" height="10" fill="#8fa8cc"/><rect x="13" y="3" width="1" height="10" fill="#2c4d7c"/><rect x="0" y="12" width="14" height="1" fill="#27497a"/><rect x="2" y="4" width="5" height="1" fill="#000"/><rect x="4" y="6" width="8" height="1" fill="#8c8c8c"/><rect x="2" y="8" width="5" height="1" fill="#000"/><rect x="4" y="10" width="8" height="1" fill="#8c8c8c"/></svg><span class="tt" style="left:50px;width:196px">SignUp Form on Landing Page</span><span class="du">1d</span></div>
<div class="tr" style="top:573px"><svg class="ic" style="left:32px" width="14" height="13" viewBox="0 0 14 13"><rect x="0" y="0" width="14" height="13" fill="#fff"/><rect x="1" y="3" width="12" height="9" fill="url(#tg)"/><rect x="0" y="0" width="14" height="3" fill="url(#th)"/><rect x="1" y="1" width="11" height="1" fill="#9cc3fb" opacity=".7"/><rect x="0" y="3" width="1" height="10" fill="#8fa8cc"/><rect x="13" y="3" width="1" height="10" fill="#2c4d7c"/><rect x="0" y="12" width="14" height="1" fill="#27497a"/><rect x="2" y="4" width="5" height="1" fill="#000"/><rect x="4" y="6" width="8" height="1" fill="#8c8c8c"/><rect x="2" y="8" width="5" height="1" fill="#000"/><rect x="4" y="10" width="8" height="1" fill="#8c8c8c"/></svg><span class="tt" style="left:50px;width:196px">Remove Where did you hear about us?</span><span class="du">1d</span></div>
<div class="tr" style="top:597px"><svg class="ic" style="left:16px" width="14" height="13" viewBox="0 0 14 13"><rect x="0" y="0" width="14" height="13" fill="#fff"/><rect x="1" y="3" width="12" height="9" fill="url(#tg)"/><rect x="0" y="0" width="14" height="3" fill="url(#th)"/><rect x="1" y="1" width="11" height="1" fill="#9cc3fb" opacity=".7"/><rect x="0" y="3" width="1" height="10" fill="#8fa8cc"/><rect x="13" y="3" width="1" height="10" fill="#2c4d7c"/><rect x="0" y="12" width="14" height="1" fill="#27497a"/><rect x="2" y="4" width="5" height="1" fill="#000"/><rect x="4" y="6" width="8" height="1" fill="#8c8c8c"/><rect x="2" y="8" width="5" height="1" fill="#000"/><rect x="4" y="10" width="8" height="1" fill="#8c8c8c"/></svg><span class="tt" style="left:34px;width:212px">Start services training for Dave and Tiva</span><span class="du">1d</span></div>
<div class="tr" style="top:621px"><svg class="ic" style="left:16px" width="14" height="13" viewBox="0 0 14 13"><rect x="0" y="0" width="14" height="13" fill="#fff"/><rect x="1" y="3" width="12" height="9" fill="url(#tg)"/><rect x="0" y="0" width="14" height="3" fill="url(#th)"/><rect x="1" y="1" width="11" height="1" fill="#9cc3fb" opacity=".7"/><rect x="0" y="3" width="1" height="10" fill="#8fa8cc"/><rect x="13" y="3" width="1" height="10" fill="#2c4d7c"/><rect x="0" y="12" width="14" height="1" fill="#27497a"/><rect x="2" y="4" width="5" height="1" fill="#000"/><rect x="4" y="6" width="8" height="1" fill="#8c8c8c"/><rect x="2" y="8" width="5" height="1" fill="#000"/><rect x="4" y="10" width="8" height="1" fill="#8c8c8c"/></svg><span class="tt" style="left:34px;width:212px">Adding Google Tracking Code</span><span class="du">1d</span></div>
</div>
<div id="gantt" class="abs">
<div class="gr" style="top:-3px"><span class="lb" style="width:331px">Whiteboard</span><div class="tb" style="left:360px;width:8px"><i></i></div></div>
<div class="gr" style="top:21px"><span class="lb" style="width:374px">Get a correct certificate for BINLABS</span><div class="tb" style="left:403px;width:8px"><i></i></div></div>
<div class="gr" style="top:45px"><span class="lb" style="width:322px">Reducing white space from pages and show more data</span><div class="pb" style="left:345px;width:193px"><b class="l"></b><b class="r"></b></div></div>
<div class="gr" style="top:69px"><span class="lb" style="width:322px">Overview page</span><div class="pb" style="left:345px;width:193px"><b class="l"></b><b class="r"></b></div></div>
<div class="gr" style="top:93px"><span class="lb" style="width:322px">Remove the post status from top of page</span><div class="tb" style="left:351px;width:181px"><i></i></div></div>
<div class="gr" style="top:117px"><span class="lb" style="width:322px">Make the contributors section scroll horizontaly instead of vertically</span><div class="tb" style="left:351px;width:181px"><i></i></div></div>
<div class="gr" style="top:141px"><span class="lb" style="width:322px">Reduce the height of area where Project name &amp; contributors are shown</span><div class="tb" style="left:351px;width:181px"><i></i></div></div>
<div class="gr" style="top:165px"><span class="lb" style="width:322px">Add none if there are no upcoming tasks</span><div class="tb" style="left:351px;width:181px"><i></i></div></div>
<div class="gr" style="top:189px"><span class="lb" style="width:322px">Reduce vertical height of Late section</span><div class="tb" style="left:351px;width:181px"><i></i></div></div>
<div class="gr" style="top:213px"><span class="lb" style="width:322px">Project Files</span><div class="pb" style="left:345px;width:193px"><b class="l"></b><b class="r"></b></div></div>
<div class="gr" style="top:237px"><span class="lb" style="width:322px">Bring the search box closer to yellow buttons</span><div class="tb" style="left:351px;width:181px"><i></i></div></div>
<div class="gr" style="top:261px"><span class="lb" style="width:322px">task page</span><div class="pb" style="left:345px;width:193px"><b class="l"></b><b class="r"></b></div></div>
<div class="gr" style="top:285px"><span class="lb" style="width:322px">Bring the search box closer to yellow buttons</span><div class="tb" style="left:351px;width:181px"><i></i></div></div>
<div class="gr" style="top:309px"><span class="lb" style="width:322px">Reduce the vertical space between tasks</span><div class="tb" style="left:351px;width:181px"><i></i></div></div>
<div class="gr" style="top:333px"><span class="lb" style="width:322px">Gantt page</span><div class="pb" style="left:345px;width:193px"><b class="l"></b><b class="r"></b></div></div>
<div class="gr" style="top:357px"><span class="lb" style="width:322px">Reduce the vertical space at top of gantt</span><div class="tb" style="left:351px;width:181px"><i></i></div></div>
<div class="gr" style="top:381px"><span class="lb" style="width:520px">Deploying to production</span><div class="pb" style="left:543px;width:63px"><b class="l"></b><b class="r"></b></div></div>
<div class="gr" style="top:405px"><span class="lb" style="width:520px">Set up NGINX https proxy for FSS</span><div class="tb" style="left:549px;width:8px"><i></i></div></div>
<div class="gr" style="top:429px"><span class="lb" style="width:545px">Test fab SSH access tomorrow</span><div class="tb" style="left:574px;width:26px"><i></i></div></div>
<div class="gr" style="top:453px"><span class="lb" style="width:554px">Set up extjs.binfire.com</span><div class="tb" style="left:583px;width:9px"><i></i></div></div>
<div class="gr" style="top:477px"><span class="lb" style="width:545px">New landing page</span><div class="pb" style="left:568px;width:38px"><b class="l"></b><b class="r"></b></div></div>
<div class="gr" style="top:501px"><span class="lb" style="width:545px">Finish css stuff for pricing plan List</span><div class="tb" style="left:574px;width:9px"><i></i></div></div>
<div class="gr" style="top:525px"><span class="lb" style="width:545px">Add checks</span><div class="tb" style="left:574px;width:9px"><i></i></div></div>
<div class="gr" style="top:549px"><span class="lb" style="width:545px">SignUp Form on Landing Page</span><div class="tb" style="left:574px;width:9px"><i></i></div></div>
<div class="gr" style="top:573px"><span class="lb" style="width:563px">Remove Where did you hear about us?</span><div class="tb" style="left:592px;width:8px"><i></i></div></div>
<div class="gr" style="top:597px"><span class="lb" style="width:460px">Start services training for Dave and Tiva</span><div class="tb" style="left:489px;width:8px"><i></i></div></div>
<div class="gr" style="top:621px"><span class="lb" style="width:726px">Adding Google Tracking Code</span><div class="tb" style="left:755px;width:8px"><i></i></div></div>
</div>
<div id="today" class="abs"></div>
<div id="hdrL" class="abs"><span class="c1">Tasks</span><div class="sep"></div><span class="c2">Duration</span></div>
<div id="hdrR" class="abs">
<div class="r1">2012</div>
<div class="m" style="left:0;width:267px">Jun 2012</div>
<div class="m" style="left:267px;width:266px">Jul 2012</div>
<div class="m" style="left:533px;width:266px">Aug 2012</div>
<div class="m" style="left:799px;width:266px">Sep 2012</div>
<div class="m" style="left:1065px;width:265px">Oct 2012</div>
</div>
<div id="vsh" class="abs"></div>
<div id="split" class="abs"></div>
<div id="vs" class="abs"></div><div id="thumb" class="abs"></div>
<div id="rb" class="abs"></div><div id="bb" class="abs"></div>
<div id="dark0" class="abs"></div><div id="dark" class="abs"></div>
<div id="chat" class="abs">Chat (1 online)</div>
</div>
</body>
</html>
